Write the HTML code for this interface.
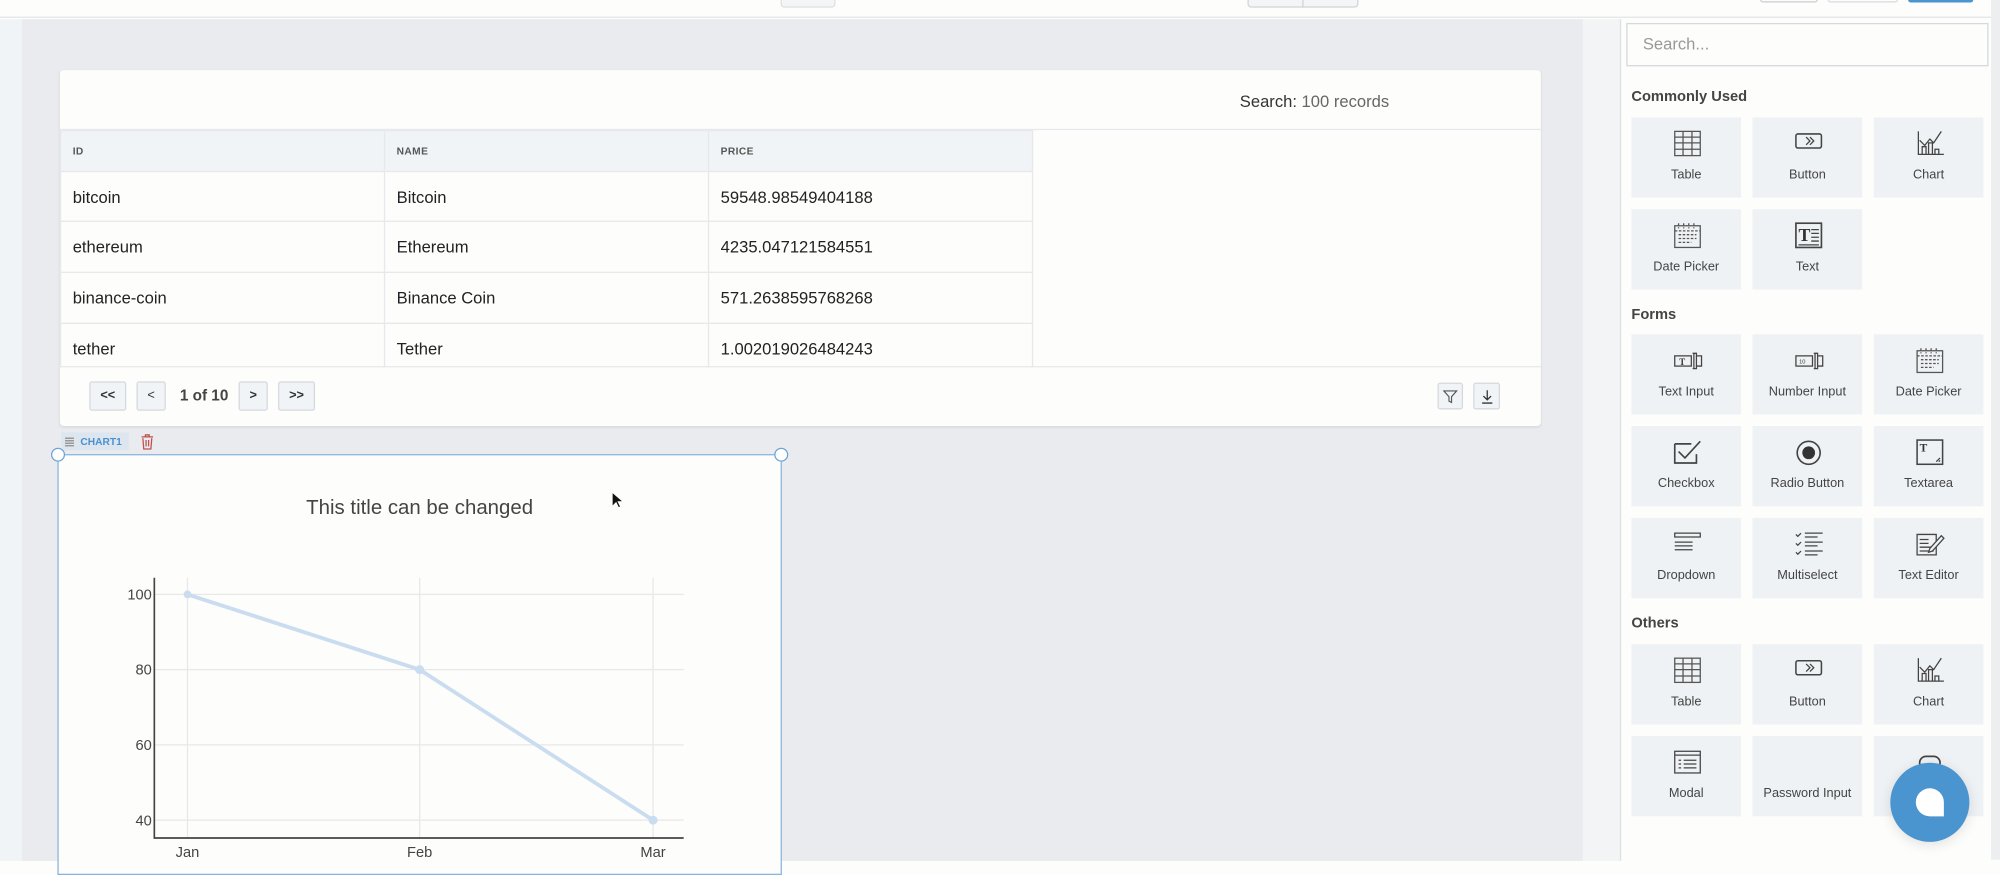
<!DOCTYPE html>
<html><head><meta charset="utf-8"><style>
*{box-sizing:border-box;margin:0;padding:0}
html,body{width:2000px;height:860px;overflow:hidden;background:#fdfdfb;font-family:"Liberation Sans",Arial,sans-serif;color:#222}
#s{position:absolute;left:0;top:0;width:1568px;height:674px;transform:scale(1.27551);transform-origin:0 0}
.a{position:absolute}
.cell{position:absolute;border:1px solid #e6e8eb;background:#fdfdfb;font-size:13px;padding-left:9px;display:flex;align-items:center}
.hd{background:#f1f4f7;font-size:8px;font-weight:bold;color:#555;letter-spacing:.3px}
.pb{position:absolute;top:299px;height:23px;border:1px solid #d5d9de;background:#f1f4f7;border-radius:2px;font-size:10px;font-weight:bold;display:flex;align-items:center;justify-content:center;color:#333}
.tile{position:absolute;width:86px;height:63px;background:#eff2f5}
.tile svg{position:absolute;left:33px;top:10px}
.tile span{position:absolute;left:0;right:0;top:40px;text-align:center;font-size:10px;color:#444}
.sec{position:absolute;left:1279px;font-size:11.5px;font-weight:bold;color:#444}
</style></head><body><div id="s">
<!-- top bar -->
<div class="a" style="left:0;top:0;width:1568px;height:14px;background:#fdfdfb;border-bottom:1px solid #e3e5e8"></div>
<div class="a" style="left:612px;top:-4px;width:43px;height:10px;border:1px solid #dde0e4;border-radius:3px;background:#f3f5f7"></div>
<div class="a" style="left:978px;top:-4px;width:87px;height:10px;border:1px solid #d0d4da;border-radius:3px;background:#f3f5f7"></div>
<div class="a" style="left:1021px;top:-4px;width:1px;height:10px;background:#d0d4da"></div>
<div class="a" style="left:1380px;top:-4px;width:45px;height:6px;border:1px solid #c8ccd2;border-radius:2px"></div>
<div class="a" style="left:1433px;top:-4px;width:55px;height:6px;border:1px solid #d8dbe0;border-radius:2px"></div>
<div class="a" style="left:1496px;top:-4px;width:51px;height:6px;background:#4a94d0;border-radius:2px"></div>
<!-- left strip & canvas -->
<div class="a" style="left:0;top:15px;width:17px;height:660px;background:#f1f4f7"></div>
<div class="a" style="left:17px;top:15px;width:1224px;height:660px;background:#e9ebef"></div>
<div class="a" style="left:1241px;top:15px;width:29px;height:660px;background:#f2f4f6"></div>
<div class="a" style="left:1270px;top:15px;width:1px;height:660px;background:#dcdfe3"></div>
<div class="a" style="left:1561px;top:0;width:7px;height:674px;background:#eceef0"></div>
<!-- table card -->
<div class="a" style="left:47px;top:55px;width:1161px;height:279px;background:#fdfdfb;border-radius:3px;box-shadow:0 1px 2px rgba(0,0,0,.08)"></div>
<div class="a" style="left:972px;top:72px;font-size:13px;color:#333">Search: <span style="color:#666">100 records</span></div>
<div class="a" style="left:47px;top:101px;width:1161px;height:1px;background:#e6e8eb"></div>
<div class="cell hd" style="left:47px;top:102px;width:255px;height:33px">ID</div>
<div class="cell hd" style="left:301px;top:102px;width:255px;height:33px">NAME</div>
<div class="cell hd" style="left:555px;top:102px;width:255px;height:33px">PRICE</div>
<div class="cell" style="left:47px;top:134px;width:255px;height:40px">bitcoin</div>
<div class="cell" style="left:301px;top:134px;width:255px;height:40px">Bitcoin</div>
<div class="cell" style="left:555px;top:134px;width:255px;height:40px">59548.98549404188</div>
<div class="cell" style="left:47px;top:173px;width:255px;height:41px">ethereum</div>
<div class="cell" style="left:301px;top:173px;width:255px;height:41px">Ethereum</div>
<div class="cell" style="left:555px;top:173px;width:255px;height:41px">4235.047121584551</div>
<div class="cell" style="left:47px;top:213px;width:255px;height:41px">binance-coin</div>
<div class="cell" style="left:301px;top:213px;width:255px;height:41px">Binance Coin</div>
<div class="cell" style="left:555px;top:213px;width:255px;height:41px">571.2638595768268</div>
<div class="cell" style="left:47px;top:253px;width:255px;height:35px;border-bottom:none;padding-top:4px">tether</div>
<div class="cell" style="left:301px;top:253px;width:255px;height:35px;border-bottom:none;padding-top:4px">Tether</div>
<div class="cell" style="left:555px;top:253px;width:255px;height:35px;border-bottom:none;padding-top:4px">1.002019026484243</div>
<div class="a" style="left:47px;top:287px;width:1161px;height:1px;background:#e6e8eb"></div>
<div class="pb" style="left:70px;width:29px">&lt;&lt;</div>
<div class="pb" style="left:107px;width:23px;font-weight:normal">&lt;</div>
<div class="a" style="left:141px;top:303px;font-size:12px;font-weight:bold;color:#444">1 of 10</div>
<div class="pb" style="left:187px;width:23px">&gt;</div>
<div class="pb" style="left:218px;width:29px">&gt;&gt;</div>
<div class="pb" style="left:1127px;width:20px;top:300px;height:21px"><svg width="12" height="12" viewBox="0 0 12 12"><path d="M1 1.5h10L7 6v4.5L5 9.5V6z" fill="none" stroke="#555" stroke-width=".9"/></svg></div>
<div class="pb" style="left:1155px;width:21px;top:300px;height:21px"><svg width="12" height="12" viewBox="0 0 12 12"><path d="M6 1v7M3 5.5L6 8.5 9 5.5M2 11h8" fill="none" stroke="#333" stroke-width="1"/></svg></div>
<!-- chart -->
<div class="a" style="left:48px;top:339px;width:53px;height:14px;background:#dde6ef"></div>
<div class="a" style="left:51px;top:342px;width:7px;height:8px;background:repeating-linear-gradient(0deg,#999 0 1px,transparent 1px 2px)"></div>
<div class="a" style="left:63px;top:342px;font-size:8px;font-weight:bold;color:#4a90d0">CHART1</div>
<svg class="a" style="left:110px;top:340px" width="11" height="13" viewBox="0 0 11 13"><path d="M1 2.5h9M4 2.5V1h3v1.5M2 3.5l.7 8.5h5.6L9 3.5M4.5 5v5M6.5 5v5" fill="none" stroke="#c0504d" stroke-width="1"/></svg>
<div class="a" style="left:45px;top:356px;width:568px;height:330px;background:#fdfdfb;border:1px solid #88b4e0"></div>
<div class="a" style="left:40px;top:351px;width:11px;height:11px;border-radius:50%;border:1px solid #6fa3d8;background:#fff"></div>
<div class="a" style="left:607px;top:351px;width:11px;height:11px;border-radius:50%;border:1px solid #6fa3d8;background:#fff"></div>
<div class="a" style="left:45px;top:390px;width:568px;text-align:center;font-size:16px;color:#444">This title can be changed</div>
<svg class="a" style="left:0;top:0" width="620" height="674" viewBox="0 0 620 674">
<g stroke="#e8e8e8" stroke-width="1"><path d="M121 466H536M121 525H536M121 584H536M121 643H536M147 453V657M329 453V657M512 453V657"/></g>
<path d="M121 453V657H536" fill="none" stroke="#444" stroke-width="1.3"/>
<polyline points="147,466 329,525 512,643" fill="none" stroke="#cadcf0" stroke-width="3"/>
<g fill="#cadcf0"><circle cx="147" cy="466" r="3"/><circle cx="329" cy="525" r="3.5"/><circle cx="512" cy="643" r="3.5"/></g>
<g font-family="Liberation Sans" font-size="11.5" fill="#444" text-anchor="end"><text x="119" y="470">100</text><text x="119" y="529">80</text><text x="119" y="588">60</text><text x="119" y="647">40</text></g>
<g font-family="Liberation Sans" font-size="11.5" fill="#444" text-anchor="middle"><text x="147" y="672">Jan</text><text x="329" y="672">Feb</text><text x="512" y="672">Mar</text></g>
<path d="M480 386v11l3-3 2 4 1.5-.7-2-4h4z" fill="#111" stroke="#fff" stroke-width=".6"/>
</svg>
<!-- sidebar -->
<div class="a" style="left:1275px;top:18px;width:284px;height:34px;border:1px solid #d5d8dc;background:#fdfdfb;font-size:13px;color:#999;padding:8px 0 0 12px">Search...</div>
<div class="sec" style="top:70px">Commonly Used</div>
<div class="sec" style="top:241px">Forms</div>
<div class="sec" style="top:483px">Others</div>
<svg width="0" height="0" style="position:absolute"><defs>
<g id="tb"><rect x="1" y="1" width="20" height="19" fill="none" stroke="#555"/><path d="M1 5.5h20M1 10h20M1 15h20M7.5 1v19M14.5 1v19" stroke="#555"/></g>
<g id="bt"><rect x="1" y="3" width="20" height="11" rx="1.5" fill="none" stroke="#444" stroke-width="1.2"/><path d="M9 5.5l3 3-3 3M12 5.5l3 3-3 3" fill="none" stroke="#444"/></g>
<g id="ch"><path d="M2 1v18h20M5 19v-6h3v6M10 19v-9h3v9M15 19v-4h3v4M3 8l4 4 4-5 3 3 6-9" fill="none" stroke="#444"/></g>
<g id="dp"><rect x="1" y="3" width="20" height="17" fill="none" stroke="#555"/><path d="M1 7h20M4 1v4M8 1v4M12 1v4M16 1v4M4 10h14M4 13h14M4 16h10" stroke="#555" stroke-dasharray="2 1.2"/></g>
</defs></svg>
<!-- row1 -->
<div class="tile" style="left:1279px;top:92px"><svg width="22" height="21"><use href="#tb"/></svg><span>Table</span></div>
<div class="tile" style="left:1374px;top:92px"><svg width="22" height="21"><use href="#bt"/></svg><span>Button</span></div>
<div class="tile" style="left:1469px;top:92px"><svg width="23" height="21"><use href="#ch"/></svg><span>Chart</span></div>
<div class="tile" style="left:1279px;top:164px"><svg width="22" height="21"><use href="#dp"/></svg><span>Date Picker</span></div>
<div class="tile" style="left:1374px;top:164px"><svg width="22" height="21"><rect x="1" y="1" width="20" height="19" fill="none" stroke="#444" stroke-width="1.3"/><text x="3" y="15" font-family="Liberation Serif" font-weight="bold" font-size="14" fill="#333">T</text><path d="M13 6h6M13 9h6M13 12h6M13 15h6M3 18h16" stroke="#444"/></svg><span>Text</span></div>
<!-- forms -->
<div class="tile" style="left:1279px;top:262px"><svg width="24" height="21"><rect x="1" y="7" width="13" height="8" fill="none" stroke="#444"/><text x="4.5" y="14" font-size="7" font-weight="bold" fill="#333" font-family="Liberation Serif">T</text><path d="M16 5v12M15 5h3v12h-3M18 7h4v8h-4" fill="none" stroke="#444"/></svg><span>Text Input</span></div>
<div class="tile" style="left:1374px;top:262px"><svg width="24" height="21"><rect x="1" y="7" width="13" height="8" fill="none" stroke="#444"/><text x="3.5" y="13" font-size="4.5" fill="#333" font-family="Liberation Sans">10</text><path d="M16 5v12M15 5h3v12h-3M18 7h4v8h-4" fill="none" stroke="#444"/></svg><span>Number Input</span></div>
<div class="tile" style="left:1469px;top:262px"><svg width="22" height="21"><use href="#dp"/></svg><span>Date Picker</span></div>
<div class="tile" style="left:1279px;top:334px"><svg width="22" height="21"><path d="M1 4h13M1 4v15h17v-7" fill="none" stroke="#444" stroke-width="1.3"/><path d="M4 10l5 5L21 2" fill="none" stroke="#444" stroke-width="1.3"/></svg><span>Checkbox</span></div>
<div class="tile" style="left:1374px;top:334px"><svg width="22" height="21"><circle cx="11" cy="11" r="9" fill="none" stroke="#444" stroke-width="1.3"/><circle cx="11" cy="11" r="5" fill="#333"/></svg><span>Radio Button</span></div>
<div class="tile" style="left:1469px;top:334px"><svg width="22" height="21"><rect x="1" y="1" width="20" height="19" fill="none" stroke="#444" stroke-width="1.2"/><text x="3" y="10" font-family="Liberation Serif" font-weight="bold" font-size="9" fill="#333">T</text><path d="M16 18l3-3M18 18l1-1" stroke="#444"/></svg><span>Textarea</span></div>
<div class="tile" style="left:1279px;top:406px"><svg width="22" height="21"><path d="M1 2h20v3H1zM1 9h14M1 12h14M1 15h14" fill="none" stroke="#444"/></svg><span>Dropdown</span></div>
<div class="tile" style="left:1374px;top:406px"><svg width="24" height="21"><path d="M1 3l1.5 1.5L5 2M1 10l1.5 1.5L5 9M1 17l1.5 1.5L5 16M8 2h14M8 5h10M8 9h14M8 12h10M8 16h14M8 19h10" fill="none" stroke="#444"/></svg><span>Multiselect</span></div>
<div class="tile" style="left:1469px;top:406px"><svg width="24" height="21"><path d="M1 3h15v16H1zM3 7h7M3 10h7M3 13h9M3 16h11" fill="none" stroke="#444"/><path d="M11 14l9-10 2 2-9 10-3 1z" fill="#eff2f5" stroke="#444"/></svg><span>Text Editor</span></div>
<!-- others -->
<div class="tile" style="left:1279px;top:505px"><svg width="22" height="21"><use href="#tb"/></svg><span>Table</span></div>
<div class="tile" style="left:1374px;top:505px"><svg width="22" height="21"><use href="#bt"/></svg><span>Button</span></div>
<div class="tile" style="left:1469px;top:505px"><svg width="23" height="21"><use href="#ch"/></svg><span>Chart</span></div>
<div class="tile" style="left:1279px;top:577px"><svg width="22" height="21"><rect x="1" y="2" width="20" height="17" fill="none" stroke="#444"/><path d="M1 5h20M4 9h2M8 9h10M4 12h2M8 12h10M4 15h2M8 15h10" stroke="#444"/></svg><span>Modal</span></div>
<div class="tile" style="left:1374px;top:577px"><span>Password Input</span></div>
<div class="tile" style="left:1469px;top:577px"><svg width="22" height="21"><rect x="3" y="6" width="16" height="10" rx="5" fill="none" stroke="#444" stroke-width="1.3"/></svg><span>T</span></div>
<div class="a" style="left:1482px;top:598px;width:62px;height:62px;border-radius:50%;background:#4a94d0;box-shadow:0 2px 10px rgba(0,0,0,.12)"></div>
<div class="a" style="left:1502px;top:618px;width:22px;height:22px;background:#fff;border-radius:50% 50% 0 50%"></div>
</div></body></html>
